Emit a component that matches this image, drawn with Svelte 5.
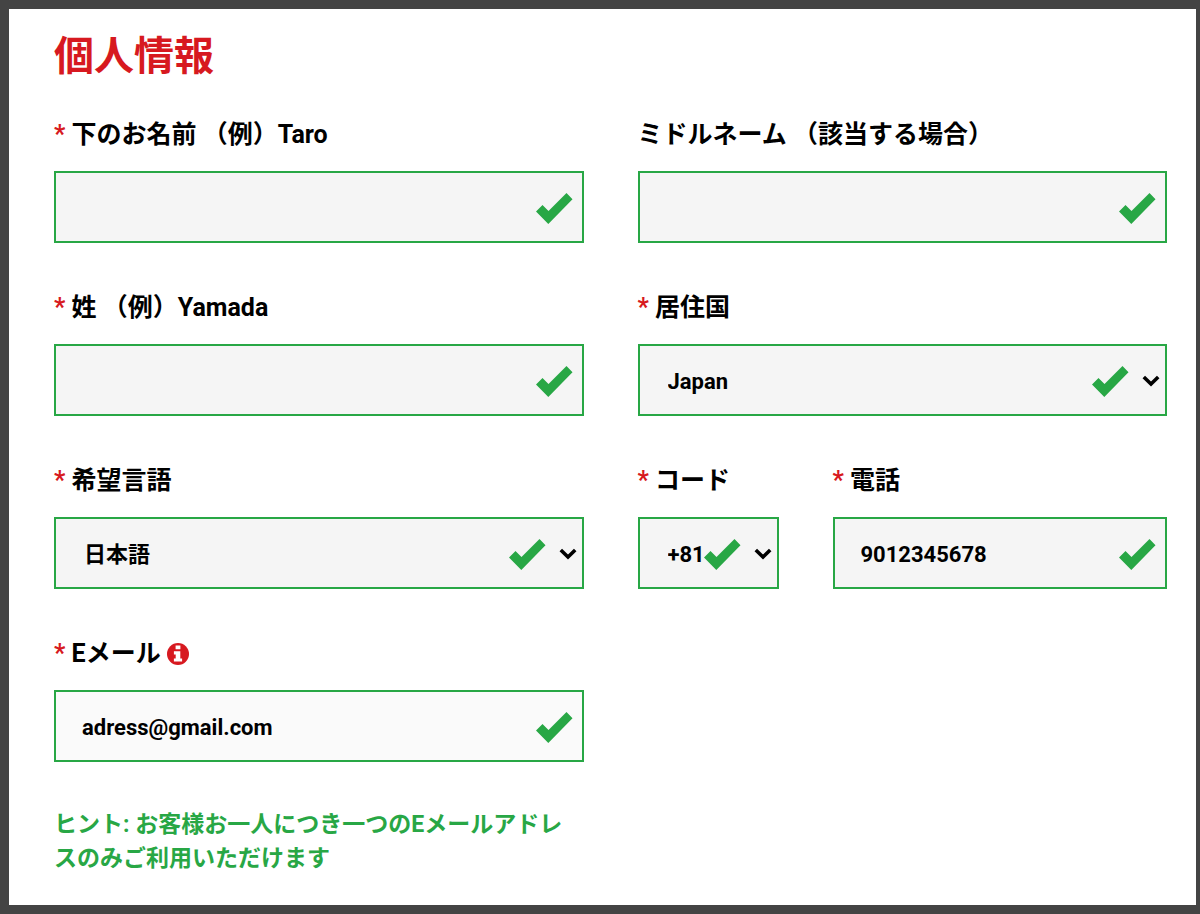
<!-- Personal information form -->

<script>
    let firstName = '';
    let middleName = '';
    let lastName = '';
    let country = 'Japan';
    let language = 'ja';
    let code = '+81';
    let phone = '9012345678';
    let email = 'adress@gmail.com';
</script>

{#snippet check()}
    <svg class="check" viewBox="0 0 37 31" aria-hidden="true">
        <path d="M0 18.5 6.5 12 12.5 18 30.5 0 36.5 6.3 12.3 31Z" />
    </svg>
{/snippet}

{#snippet chevron()}
    <svg class="chevron" viewBox="0 0 18 12" aria-hidden="true">
        <path d="M1.8 2 9 9 16.2 2" />
    </svg>
{/snippet}

<main>
    <h1>個人情報</h1>
    <form class="form" on:submit|preventDefault>
        <div class="field">
            <label for="first"><span class="star">*</span> 下のお名前 （例）Taro</label>
            <div class="control">
                <input id="first" type="text" required bind:value={firstName}>
                {@render check()}
            </div>
        </div>

        <div class="field">
            <label for="middle">ミドルネーム （該当する場合）</label>
            <div class="control">
                <input id="middle" type="text" bind:value={middleName}>
                {@render check()}
            </div>
        </div>

        <div class="field">
            <label for="last"><span class="star">*</span> 姓 （例）Yamada</label>
            <div class="control">
                <input id="last" type="text" required bind:value={lastName}>
                {@render check()}
            </div>
        </div>

        <div class="field">
            <label for="country"><span class="star">*</span> 居住国</label>
            <div class="control dropdown">
                <select id="country" bind:value={country}>
                    <option>Japan</option>
                </select>
                {@render check()}
                {@render chevron()}
            </div>
        </div>

        <div class="field">
            <label for="language"><span class="star">*</span> 希望言語</label>
            <div class="control dropdown">
                <select id="language" bind:value={language}>
                    <option value="ja">日本語</option>
                </select>
                {@render check()}
                {@render chevron()}
            </div>
        </div>

        <div class="phone">
            <div class="field">
                <label for="code"><span class="star">*</span> コード</label>
                <div class="control dropdown">
                    <select id="code" bind:value={code}>
                        <option>+81</option>
                    </select>
                    {@render check()}
                    {@render chevron()}
                </div>
            </div>
            <div class="field">
                <label for="tel"><span class="star">*</span> 電話</label>
                <div class="control">
                    <input id="tel" type="tel" required bind:value={phone}>
                    {@render check()}
                </div>
            </div>
        </div>

        <div class="field">
            <label for="email"><span class="star">*</span> Eメール
                <svg class="info" viewBox="0 0 22 22" aria-hidden="true">
                    <circle cx="11" cy="11" r="11" />
                    <path d="M8.6 2.4h4.8v3.9H8.6ZM6.9 8.2h6.4v7.2h1.8v3.2H6.9v-3.2h1.8v-4H6.9Z" />
                </svg>
            </label>
            <div class="control">
                <input id="email" class="editable" type="email" required aria-describedby="hint" bind:value={email}>
                {@render check()}
            </div>
            <p class="hint" id="hint">ヒント: お客様お一人につき一つのEメールアドレスのみご利用いただけます</p>
        </div>
    </form>
</main>

<style>
    :global(body){
        background-color: #fff;
    }

    main{
        box-sizing: border-box;
        min-height: 100vh;
        padding: 24px 29px 28px 45px;
        border: solid #444;
        border-width: 9px 4px 9px 9px;
        font-family: Roboto, "Noto Sans CJK JP", sans-serif;
        font-weight: 700;
        color: #000;
    }

    h1{
        margin: 0 0 36px;
        font-size: 40px;
        line-height: 48px;
        color: #d71920;
    }

    .form{
        display: grid;
        grid-template-columns: 1fr 1fr;
        gap: 47px 54px;
    }

    .field{min-width: 0;}

    .phone{
        display: grid;
        grid-template-columns: 141px 1fr;
        gap: 54px;
    }

    label{
        display: block;
        margin-bottom: 18px;
        font-size: 25px;
        line-height: 36px;
        white-space: nowrap;
    }

    .star{color: #d71920;}

    .control{position: relative;}

    input, select{
        display: block;
        box-sizing: border-box;
        width: 100%;
        height: 72px;
        margin: 0;
        padding: 2px 56px 0 26px;
        border: 2px solid #28a745;
        border-radius: 0;
        background-color: #f5f5f5;
        font: inherit;
        font-size: 22px;
        color: #000;
        appearance: none;
    }

    select{padding: 2px 0 0 28px;}

    .editable{background-color: #fafafa;}

    /* Icons lying over the controls */
    .check{
        position: absolute;
        top: 22px;
        right: 11px;
        width: 37px;
        height: 31px;
        fill: #28a745;
        pointer-events: none;
    }

    .dropdown .check{right: 38px;}

    .chevron{
        position: absolute;
        top: 31px;
        right: 7px;
        width: 18px;
        height: 12px;
        fill: none;
        stroke: #000;
        stroke-width: 3.6;
        pointer-events: none;
    }

    .info{
        width: 22px;
        height: 22px;
        vertical-align: -3px;
        fill: #d71920;
    }

    .info path{fill: #fff;}

    .hint{
        margin: 46px 0 0;
        font-size: 23px;
        line-height: 34px;
        color: #28a745;
    }

    @media (max-width: 700px){
        .form{grid-template-columns: 1fr;}
    }
</style>
